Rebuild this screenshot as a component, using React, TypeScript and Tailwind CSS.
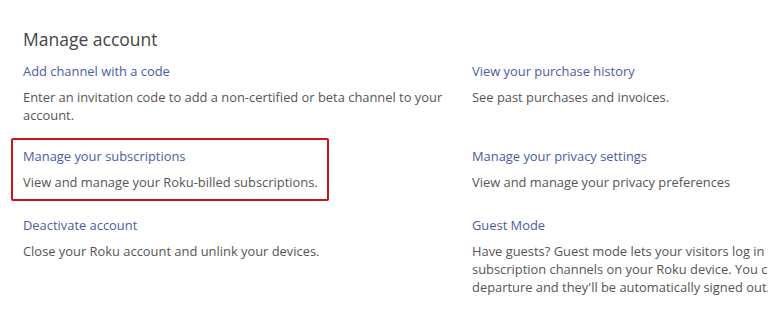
const items = [
  {
    title: "Add channel with a code",
    lines: ["Enter an invitation code to add a non-certified or beta channel to your account."],
  },
  { title: "View your purchase history", lines: ["See past purchases and invoices."] },
  {
    title: "Manage your subscriptions",
    lines: ["View and manage your Roku-billed subscriptions."],
    highlight: true,
  },
  { title: "Manage your privacy settings", lines: ["View and manage your privacy preferences"] },
  { title: "Deactivate account", lines: ["Close your Roku account and unlink your devices."] },
  {
    title: "Guest Mode",
    lines: [
      "Have guests? Guest mode lets your visitors log in to their own",
      "subscription channels on your Roku device. You can set their",
      "departure and they'll be automatically signed out.",
    ],
    nowrap: true,
  },
];

export default function App() {
  return (
    <div className="h-[314px] w-[768px] overflow-hidden bg-white font-['Open_Sans',sans-serif]">
      <div className="w-[900px] pl-[23px] pt-[28px]">
        <h2 className="text-[17.5px] leading-[22px] text-[#444]">Manage account</h2>
        <div className="mt-[12px] grid grid-cols-[449px_420px] gap-y-[23px]">
          {items.map((item, i) => (
            <div key={item.title} className={`relative pr-3 ${i >= 4 ? "mt-[2px]" : ""}`}>
              {item.highlight && (
                <div className="absolute -left-[12px] -top-[9px] h-[63px] w-[318px] rounded-[2px] border-2 border-[#d0111b]" />
              )}
              <p className="text-[12.9px] leading-[18px] text-[#4b5ca3]">{item.title}</p>
              <div className="mt-[8px] text-[12.9px] leading-[18px] text-[#555]">
                {item.lines.map((line) => (
                  <p key={line} className={item.nowrap ? "whitespace-nowrap" : ""}>
                    {line}
                  </p>
                ))}
              </div>
            </div>
          ))}
        </div>
      </div>
    </div>
  );
}
